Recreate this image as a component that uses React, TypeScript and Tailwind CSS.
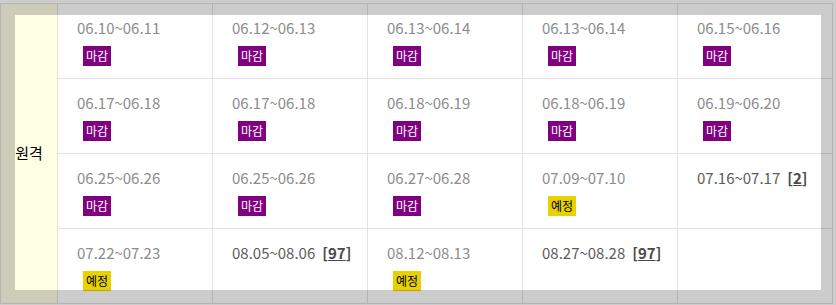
type Cell = {
  date?: string
  status?: 'closed' | 'planned'
  count?: string
}

const rows: Cell[][] = [
  [
    { date: '06.10~06.11', status: 'closed' },
    { date: '06.12~06.13', status: 'closed' },
    { date: '06.13~06.14', status: 'closed' },
    { date: '06.13~06.14', status: 'closed' },
    { date: '06.15~06.16', status: 'closed' },
  ],
  [
    { date: '06.17~06.18', status: 'closed' },
    { date: '06.17~06.18', status: 'closed' },
    { date: '06.18~06.19', status: 'closed' },
    { date: '06.18~06.19', status: 'closed' },
    { date: '06.19~06.20', status: 'closed' },
  ],
  [
    { date: '06.25~06.26', status: 'closed' },
    { date: '06.25~06.26', status: 'closed' },
    { date: '06.27~06.28', status: 'closed' },
    { date: '07.09~07.10', status: 'planned' },
    { date: '07.16~07.17', count: '2' },
  ],
  [
    { date: '07.22~07.23', status: 'planned' },
    { date: '08.05~08.06', count: '97' },
    { date: '08.12~08.13', status: 'planned' },
    { date: '08.27~08.28', count: '97' },
    {},
  ],
]

function ScheduleCell({ cell }: { cell: Cell }) {
  if (!cell.date) return <td className="border border-[#e2e2e2] align-top" />

  return (
    <td className="border border-[#e2e2e2] align-top pl-[19px] pt-[13px]">
      <div className={`text-[15px] leading-[22px] ${cell.count ? 'text-[#5c5c5c]' : 'text-[#8c8c8c]'}`}>
        {cell.date}
        {cell.count && (
          <span className="ml-[7px] font-bold text-[#4a4a4a]">
            [<span className="underline">{cell.count}</span>]
          </span>
        )}
      </div>
      {cell.status === 'closed' && (
        <span className="inline-block mt-[7px] ml-[6px] px-[3px] bg-[#800080] text-white text-[12px] leading-[20px]">
          마감
        </span>
      )}
      {cell.status === 'planned' && (
        <span className="inline-block mt-[7px] ml-[6px] px-[3px] bg-[#e8d100] text-black text-[12px] leading-[20px]">
          예정
        </span>
      )}
    </td>
  )
}

export default function App() {
  return (
    <div
      className="relative w-[836px] h-[305px] bg-white overflow-hidden pt-[3px]"
      style={{ fontFamily: '"Noto Sans CJK KR", "Noto Sans", sans-serif' }}
    >
      <table className="table-fixed border-collapse w-[833px] border-t border-t-[#142850] border-b border-b-[#d0d0d0]">
        <colgroup>
          <col className="w-[57px]" />
          <col className="w-[155px]" />
          <col className="w-[155px]" />
          <col className="w-[155px]" />
          <col className="w-[155px]" />
          <col className="w-[155px]" />
        </colgroup>
        <tbody>
          {rows.map((row, i) => (
            <tr key={i} className="h-[75px]">
              {i === 0 && (
                <th
                  rowSpan={4}
                  className="bg-[#ffffe6] border border-[#e2e2e2] font-normal text-[15px] text-black text-center align-middle"
                >
                  원격
                </th>
              )}
              {row.map((cell, j) => (
                <ScheduleCell key={j} cell={cell} />
              ))}
            </tr>
          ))}
        </tbody>
      </table>

      {/* dimmed frame over the edges */}
      <div className="absolute inset-0 border-[15px] border-black/20 pointer-events-none" />
    </div>
  )
}
